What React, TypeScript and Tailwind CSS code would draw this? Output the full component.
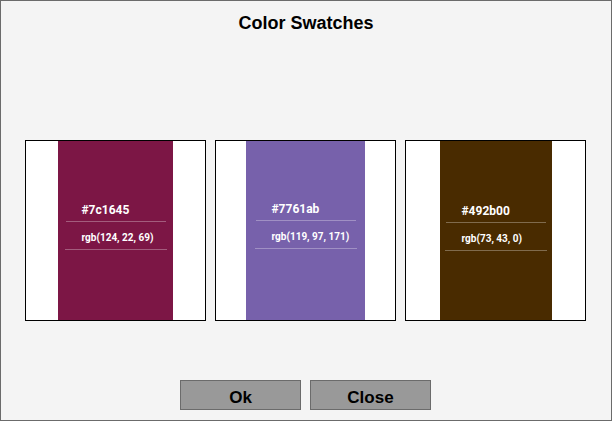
const SWATCHES = [
  { hex: "#7c1645", rgb: "rgb(124, 22, 69)", band: "w-[115px] bg-[#7c1645] pt-[61px]" },
  { hex: "#7761ab", rgb: "rgb(119, 97, 171)", band: "w-[119px] bg-[#7761ab] pt-[60px]" },
  { hex: "#492b00", rgb: "rgb(73, 43, 0)", band: "w-[112px] bg-[#492b00] pt-[62px]" },
];

function Swatch({ hex, rgb, band }: { hex: string; rgb: string; band: string }) {
  return (
    <div className="w-[181px] h-[181px] border border-black bg-white flex justify-center">
      <div className={`${band} h-full flex flex-col items-center`}>
        <div className="w-[102px] flex flex-col font-['Roboto',sans-serif] font-bold text-white">
          <div className="mx-[1px] pl-[16px] pb-[3px] text-[12px] leading-[16px] border-b border-white/30">
            {hex}
          </div>
          <div className="mt-[9px] pl-[17px] pb-[4px] text-[10px] leading-[14px] border-b border-white/30">
            {rgb}
          </div>
        </div>
      </div>
    </div>
  );
}

export default function App() {
  return (
    <div className="w-[612px] h-[421px] border border-[#6b6b6b] bg-[#f4f4f4] flex flex-col font-['Liberation_Sans',Arial,sans-serif]">
      <h1 className="pt-[12px] text-center text-[18px] leading-[21px] font-bold text-black">
        Color Swatches
      </h1>

      <div className="mt-[106px] px-[24px] flex gap-[9px]">
        {SWATCHES.map((s) => (
          <Swatch key={s.hex} {...s} />
        ))}
      </div>

      <div className="mt-[59px] pr-[1px] flex justify-center gap-[9px]">
        <button
          type="button"
          className="w-[121px] h-[30px] border border-[#6b6b6b] bg-[#999999] pt-[7px] text-[17px] leading-[20px] font-bold text-black flex justify-center items-start"
        >
          Ok
        </button>
        <button
          type="button"
          className="w-[121px] h-[30px] border border-[#6b6b6b] bg-[#999999] pt-[7px] text-[17px] leading-[20px] font-bold text-black flex justify-center items-start"
        >
          Close
        </button>
      </div>
    </div>
  );
}
